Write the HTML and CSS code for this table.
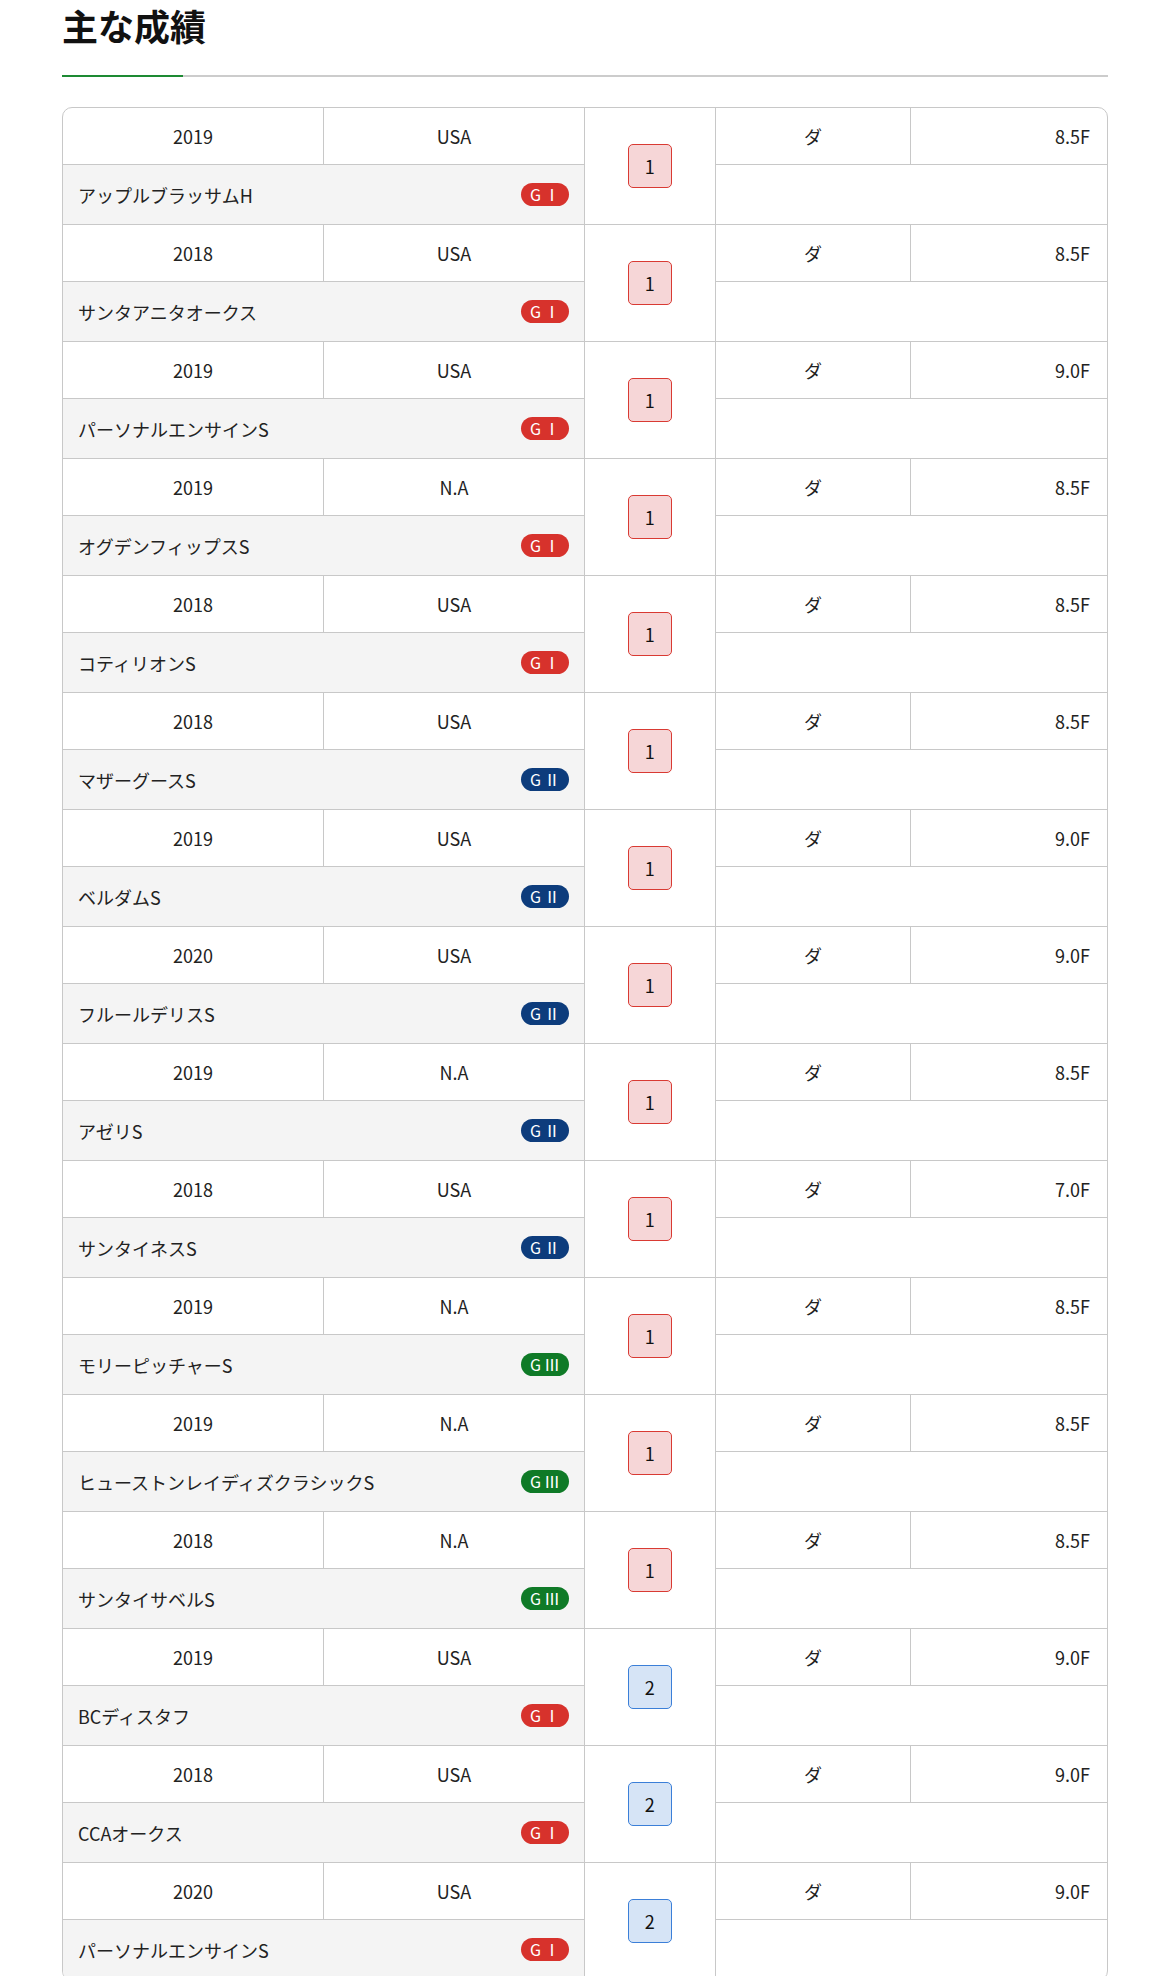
FILE: index.html
```html
<!DOCTYPE html>
<html lang="ja">
<head>
<meta charset="utf-8">
<title>主な成績</title>
<link rel="stylesheet" href="styles.css">
</head>
<body>
<section class="results">
  <h2 class="title">主な成績</h2>
  <div class="rule"><div class="rule-accent"></div></div>
  <div class="table">
    <div class="row"><div class="c year">2019</div><div class="c country">USA</div><div class="c rank"><span class="pos pos-1">1</span></div><div class="c surface">ダ</div><div class="c dist">8.5F</div><div class="c name"><span>アップルブラッサムH</span><span class="grade g1">GⅠ</span></div><div class="c blank"></div></div>
    <div class="row"><div class="c year">2018</div><div class="c country">USA</div><div class="c rank"><span class="pos pos-1">1</span></div><div class="c surface">ダ</div><div class="c dist">8.5F</div><div class="c name"><span>サンタアニタオークス</span><span class="grade g1">GⅠ</span></div><div class="c blank"></div></div>
    <div class="row"><div class="c year">2019</div><div class="c country">USA</div><div class="c rank"><span class="pos pos-1">1</span></div><div class="c surface">ダ</div><div class="c dist">9.0F</div><div class="c name"><span>パーソナルエンサインS</span><span class="grade g1">GⅠ</span></div><div class="c blank"></div></div>
    <div class="row"><div class="c year">2019</div><div class="c country">N.A</div><div class="c rank"><span class="pos pos-1">1</span></div><div class="c surface">ダ</div><div class="c dist">8.5F</div><div class="c name"><span>オグデンフィップスS</span><span class="grade g1">GⅠ</span></div><div class="c blank"></div></div>
    <div class="row"><div class="c year">2018</div><div class="c country">USA</div><div class="c rank"><span class="pos pos-1">1</span></div><div class="c surface">ダ</div><div class="c dist">8.5F</div><div class="c name"><span>コティリオンS</span><span class="grade g1">GⅠ</span></div><div class="c blank"></div></div>
    <div class="row"><div class="c year">2018</div><div class="c country">USA</div><div class="c rank"><span class="pos pos-1">1</span></div><div class="c surface">ダ</div><div class="c dist">8.5F</div><div class="c name"><span>マザーグースS</span><span class="grade g2">GⅡ</span></div><div class="c blank"></div></div>
    <div class="row"><div class="c year">2019</div><div class="c country">USA</div><div class="c rank"><span class="pos pos-1">1</span></div><div class="c surface">ダ</div><div class="c dist">9.0F</div><div class="c name"><span>ベルダムS</span><span class="grade g2">GⅡ</span></div><div class="c blank"></div></div>
    <div class="row"><div class="c year">2020</div><div class="c country">USA</div><div class="c rank"><span class="pos pos-1">1</span></div><div class="c surface">ダ</div><div class="c dist">9.0F</div><div class="c name"><span>フルールデリスS</span><span class="grade g2">GⅡ</span></div><div class="c blank"></div></div>
    <div class="row"><div class="c year">2019</div><div class="c country">N.A</div><div class="c rank"><span class="pos pos-1">1</span></div><div class="c surface">ダ</div><div class="c dist">8.5F</div><div class="c name"><span>アゼリS</span><span class="grade g2">GⅡ</span></div><div class="c blank"></div></div>
    <div class="row"><div class="c year">2018</div><div class="c country">USA</div><div class="c rank"><span class="pos pos-1">1</span></div><div class="c surface">ダ</div><div class="c dist">7.0F</div><div class="c name"><span>サンタイネスS</span><span class="grade g2">GⅡ</span></div><div class="c blank"></div></div>
    <div class="row"><div class="c year">2019</div><div class="c country">N.A</div><div class="c rank"><span class="pos pos-1">1</span></div><div class="c surface">ダ</div><div class="c dist">8.5F</div><div class="c name"><span>モリーピッチャーS</span><span class="grade g3">GⅢ</span></div><div class="c blank"></div></div>
    <div class="row"><div class="c year">2019</div><div class="c country">N.A</div><div class="c rank"><span class="pos pos-1">1</span></div><div class="c surface">ダ</div><div class="c dist">8.5F</div><div class="c name"><span>ヒューストンレイディズクラシックS</span><span class="grade g3">GⅢ</span></div><div class="c blank"></div></div>
    <div class="row"><div class="c year">2018</div><div class="c country">N.A</div><div class="c rank"><span class="pos pos-1">1</span></div><div class="c surface">ダ</div><div class="c dist">8.5F</div><div class="c name"><span>サンタイサベルS</span><span class="grade g3">GⅢ</span></div><div class="c blank"></div></div>
    <div class="row"><div class="c year">2019</div><div class="c country">USA</div><div class="c rank"><span class="pos pos-2">2</span></div><div class="c surface">ダ</div><div class="c dist">9.0F</div><div class="c name"><span>BCディスタフ</span><span class="grade g1">GⅠ</span></div><div class="c blank"></div></div>
    <div class="row"><div class="c year">2018</div><div class="c country">USA</div><div class="c rank"><span class="pos pos-2">2</span></div><div class="c surface">ダ</div><div class="c dist">9.0F</div><div class="c name"><span>CCAオークス</span><span class="grade g1">GⅠ</span></div><div class="c blank"></div></div>
    <div class="row"><div class="c year">2020</div><div class="c country">USA</div><div class="c rank"><span class="pos pos-2">2</span></div><div class="c surface">ダ</div><div class="c dist">9.0F</div><div class="c name"><span>パーソナルエンサインS</span><span class="grade g1">GⅠ</span></div><div class="c blank"></div></div>
  </div>
</section>
</body>
</html>
```

FILE: styles.css
```css
* { box-sizing: border-box; }
html, body { margin: 0; padding: 0; background: #fff; }
body {
  font-family: "Noto Sans CJK JP", "Noto Sans", sans-serif;
  color: #222;
}
.results {
  padding: 0 62px 40px 62px;
}
.title {
  margin: 0;
  padding-top: 3px;
  font-size: 36px;
  line-height: 44px;
  font-weight: 700;
  color: #111;
}
.rule {
  margin-top: 28px;
  height: 2px;
  background: #cccccc;
}
.rule-accent {
  width: 121px;
  height: 2px;
  background: #1d8a33;
}
.table {
  margin-top: 30px;
  border: 1px solid #c8c8c8;
  border-radius: 10px;
  overflow: hidden;
}
.row {
  display: grid;
  grid-template-columns: repeat(16, 1fr);
  grid-template-rows: 57px 60px;
}
.c {
  border-right: 1px solid #c8c8c8;
  border-bottom: 1px solid #c8c8c8;
  font-size: 18px;
  display: flex;
  align-items: center;
  justify-content: center;
}
.year { grid-column: 1 / 5; grid-row: 1; }
.country { grid-column: 5 / 9; grid-row: 1; }
.rank { grid-column: 9 / 11; grid-row: 1 / 3; }
.surface { grid-column: 11 / 14; grid-row: 1; }
.dist {
  grid-column: 14 / 17;
  grid-row: 1;
  border-right: none;
  justify-content: flex-end;
  padding-right: 17px;
}
.name {
  grid-column: 1 / 9;
  grid-row: 2;
  background: #f4f4f4;
  justify-content: space-between;
  padding: 0 15px;
}
.blank {
  grid-column: 11 / 17;
  grid-row: 2;
  border-right: none;
}
.grade {
  width: 48px;
  height: 23px;
  padding-left: 3px;
  border-radius: 12px;
  color: #fff;
  font-size: 16px;
  letter-spacing: 3px;
  line-height: 23px;
  text-align: center;
  flex-shrink: 0;
  white-space: nowrap;
}
.g1 { background: #d7322c; }
.g2 { background: #0d3c7c; }
.g3 { background: #0f7a27; }
.pos {
  width: 44px;
  height: 44px;
  border-radius: 5px;
  display: flex;
  align-items: center;
  justify-content: center;
  font-size: 18px;
  color: #111;
}
.pos-1 {
  background: #f6d6d7;
  border: 1.5px solid #d93a33;
}
.pos-2 {
  background: #d6e4f6;
  border: 1.5px solid #3b7fd8;
}
```
